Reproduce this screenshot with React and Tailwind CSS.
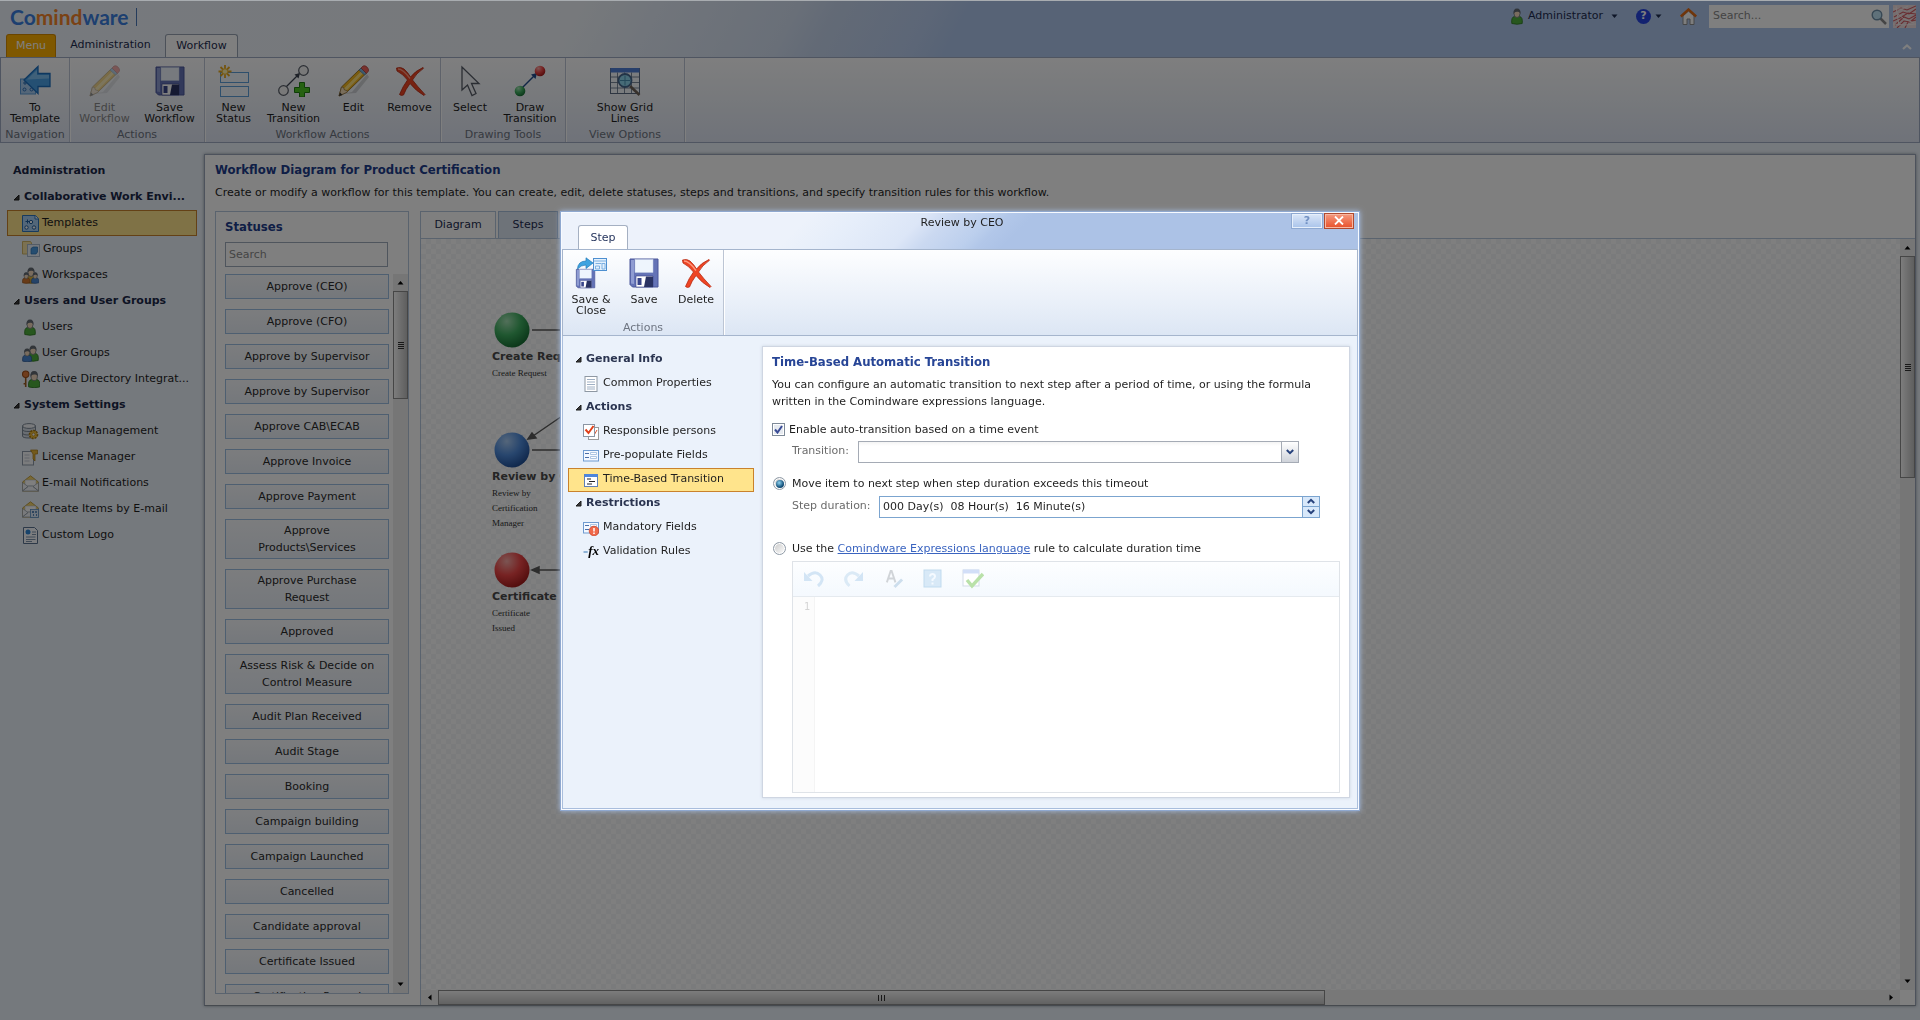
import React from "react";

/* ---------- icons ---------- */

const Svg = ({ size = 32, box = 32, children, className = "" }) => (
  <svg width={size} height={size} viewBox={`0 0 ${box} ${box}`} className={`shrink-0 ${className}`} aria-hidden="true">
    {children}
  </svg>
);

const ToTemplateIcon = () => (
  <Svg>
    <rect x="1.500" y="14" width="15" height="15" fill="#a9cdf0" stroke="#5b9bd8" />
    <circle cx="5.500" cy="24.500" r="1.500" fill="none" stroke="#2d6fb5" />
    <circle cx="12.500" cy="24.500" r="1.500" fill="none" stroke="#2d6fb5" />
    <path d="M4 18h4M6 16v4" stroke="#2d6fb5" />
    <path d="M5 15 19 1.500V8.500h12v13H19v7z" fill="#4aa0e6" stroke="#1c6fbf" strokeWidth="1.300" />
    <path d="M8 14.500 18 5v5h12v3.500z" fill="#8cc9f5" opacity=".8" />
  </Svg>
);

const PencilIcon = () => (
  <Svg>
    <path d="M4 29 14 27 29 9 31 12 18 28z" fill="#000" opacity=".15" />
    <path d="m1 31 2.500-9L22.500 3.500l5.500 5L9 27z" fill="#f2b61c" stroke="#8a6410" strokeWidth=".8" />
    <path d="m5.500 24 19-19 2 2L8 26z" fill="#ffe07a" />
    <path d="m1 31 2.500-9 2 .5 1 2.500 2.500.5.5 1.500z" fill="#f3dcb8" stroke="#8a6f45" strokeWidth=".7" />
    <path d="m1 31 1-3.500L4.500 30z" fill="#333" />
    <path d="m21 5 2-2 5.500 5-2 2z" fill="#7db4e0" stroke="#4c7ba3" strokeWidth=".7" />
    <path d="m23 3 2-2q2-1 4 1t1.500 4l-2 2.500z" fill="#f0625a" stroke="#a93b36" strokeWidth=".7" />
  </Svg>
);

const Floppy = () => (
  <>
    <path d="M2 2h28v28H4.500L2 27.500z" fill="#6473b6" stroke="#4a569a" />
    <path d="M3 3h3v24l-3-.5z" fill="#8f9cd2" />
    <rect x="7" y="2.500" width="18" height="13" fill="#eef5fd" stroke="#c4cfe4" strokeWidth=".5" />
    <path d="M8 19h17v11H8z" fill="#fff" stroke="#39458a" strokeWidth=".6" />
    <path d="M18 19.500h7V30h-9z" fill="#2a3363" />
    <rect x="9.500" y="21" width="4" height="7" fill="#39458a" />
  </>
);

const SaveIcon = () => (
  <Svg>
    <Floppy />
  </Svg>
);

const SaveCloseIcon = () => (
  <Svg>
    <g transform="translate(0 11) scale(.66)">
      <Floppy />
    </g>
    <rect x="18.500" y="1.500" width="13" height="12" fill="#e4f1fd" stroke="#4d8fd0" />
    <path d="M18.500 4h13M20.500 6.500h6M20.500 9h4v3h-4zM27 6.500h3v5.500h-3z" stroke="#7db0e2" fill="none" />
    <path d="M2.500 12Q3 4 11 4V.8L18 6l-7 5.500V8Q6 8 2.500 12z" fill="#3ea3e0" stroke="#1f79b8" strokeWidth=".7" />
  </Svg>
);

const NewStatusIcon = () => (
  <Svg>
    <rect x="2.500" y="7.500" width="28" height="10" fill="#f2f8fe" stroke="#5c9fd8" />
    <rect x="2.500" y="21.500" width="28" height="10" fill="#f2f8fe" stroke="#5c9fd8" />
    <path d="M7 0v13M.5 6.500h13M2.500 2l9 9M11.500 2l-9 9" stroke="#e9a91c" strokeWidth="1.800" />
    <circle cx="7" cy="6.500" r="2.700" fill="#fff3b0" stroke="#f0be3a" />
  </Svg>
);

const NewTransitionIcon = () => (
  <Svg>
    <path d="M8 22 21 9" stroke="#3c4250" strokeWidth="1.200" />
    <path d="m22 8-1.500 5.500-4-4z" fill="#3c4250" />
    <circle cx="25.500" cy="5.500" r="4.800" fill="#f3f3f3" stroke="#555b66" strokeWidth="1.200" />
    <circle cx="5.500" cy="25.500" r="4.800" fill="#f3f3f3" stroke="#555b66" strokeWidth="1.200" />
    <path d="M21.500 17.500h5v5h5v5h-5v4.500h-5v-4.500h-5v-5h5z" fill="#4cc423" stroke="#1f7a10" />
  </Svg>
);

const CrossIcon = () => (
  <Svg>
    <path d="M2.500 3Q7 1.500 10 4q4 3.500 6.500 8Q21 6 29 2.500l.5.800Q22 8.500 18.500 15 23 21 31 29.500l-1 1Q22 26 16 18.500 11.500 24.500 9.500 30q-2.500 1-4-.5Q9 21 13.500 15 9 9 3 6z" fill="#ee4423" stroke="#b72a12" strokeWidth=".8" />
    <path d="M4 4q5 0 12 9.500" stroke="#ff9a80" strokeWidth="1.300" fill="none" />
  </Svg>
);

const SelectIcon = () => (
  <Svg>
    <path d="M8 2v23l5.500-5 4.500 10.500 4-2L17.500 18.500H25z" fill="#f2f4f8" stroke="#555b66" strokeWidth="1.300" />
  </Svg>
);

const DrawTransitionIcon = () => (
  <Svg>
    <path d="M8 23 21 10" stroke="#234a8c" strokeWidth="1.500" />
    <path d="m23 8-1.500 6-4.500-4.500z" fill="#234a8c" />
    <circle cx="26" cy="6" r="5.300" fill="url(#ballRed)" />
    <circle cx="6" cy="26" r="5.300" fill="url(#ballGreen)" />
  </Svg>
);

const GridIcon = () => (
  <Svg>
    <rect x="1.500" y="3.500" width="29" height="25" fill="#f4f8fd" stroke="#5a6b82" />
    <rect x="1.500" y="3" width="29" height="4.500" fill="#4f7fd6" />
    <path d="M1.500 12h29M1.500 17.500h29M1.500 23h29M8.500 7.500v21M15.500 7.500v21M22.500 7.500v21" stroke="#5a6b82" strokeWidth=".8" />
    <path d="m21 21 9.500 9" stroke="#6f6258" strokeWidth="2.600" />
    <circle cx="16" cy="15.500" r="6.500" fill="#8fd6ee" stroke="#46688f" strokeWidth="1.800" />
    <path d="M11 15.500h10M16 10.500v10" stroke="#4a93b5" />
  </Svg>
);

const Person = ({ x = 0, y = 0, body = "#4fae3c", line = "#2a7420" }) => (
  <g transform={`translate(${x} ${y})`}>
    <path d="M.8 15.500Q0 9 3.500 8.500h5Q12 9 11.200 15.500 6 17 .8 15.500z" fill={body} stroke={line} strokeWidth=".8" />
    <ellipse cx="6" cy="5.500" rx="3" ry="4" fill="#f3d9bd" stroke="#70757c" strokeWidth=".8" />
    <path d="M2.500 6Q2 .5 6 .5t3.500 5.500Q9 3.500 6.500 3.800 3.500 3.500 2.500 6z" fill="#636a72" />
  </g>
);

const UserIcon = ({ x = 0 }) => (
  <Svg size={17} box={17}>
    <Person x={x} />
  </Svg>
);

const UserGroupIcon = () => (
  <Svg size={17} box={17}>
    <Person x="5" />
    <g transform="translate(0 3) scale(.85)">
      <Person body="#4a86d0" line="#2b5690" />
    </g>
  </Svg>
);

const WorkspacesIcon = () => (
  <Svg size={17} box={17}>
    <Person x="3" y="0" body="#d9b13f" line="#8f701a" />
    <g transform="translate(0 5) scale(.7)"><Person body="#d0762f" line="#8a4a15" /></g>
    <g transform="translate(9 5) scale(.7)"><Person body="#4a86d0" line="#2b5690" /></g>
  </Svg>
);

const DirectoryIcon = () => (
  <Svg size={18} box={17}>
    <Person x="5.500" y=".5" />
    <path d="M3.500 6v10M3.500 13h-2" stroke="#9a5a20" strokeWidth="1.500" />
    <circle cx="3.500" cy="4" r="3" fill="#e07a3a" stroke="#9c4a16" />
  </Svg>
);

const TemplatesIcon = () => (
  <Svg size={17} box={17}>
    <path d="M.5.5h13l3 3v13H.5z" fill="#a6cff3" stroke="#2f76bd" />
    <path d="M13 .5v3.500h3.500" fill="#fff" stroke="#2f76bd" />
    <path d="M3.500 6.500h4M5.500 4.500v4" stroke="#1f5f9f" />
    <circle cx="9" cy="7" r="1.700" fill="#fff" stroke="#1f5f9f" />
    <circle cx="4.500" cy="12.500" r="1.700" fill="#fff" stroke="#1f5f9f" />
    <circle cx="12" cy="12.500" r="1.700" fill="#fff" stroke="#1f5f9f" />
  </Svg>
);

const GroupsIcon = () => (
  <Svg size={18} box={18}>
    <path d="M.5 1.500h8l1 1.500V14H.5z" fill="#f6e3a4" stroke="#d0b566" />
    <rect x="5.500" y="4.500" width="12" height="12" fill="#e9f1fa" stroke="#a9b9cc" />
    <path d="M9 8.500 11 7h4.500v5L14 14H9z" fill="#4a9be0" stroke="#2870b4" strokeWidth=".7" />
  </Svg>
);

const BackupIcon = () => (
  <Svg size={17} box={17}>
    <path d="M.5 3v10q0 2 6.500 2t6.500-2V3z" fill="#d5dde6" stroke="#7c8896" />
    <ellipse cx="7" cy="3" rx="6.500" ry="2.400" fill="#f2f5f9" stroke="#7c8896" />
    <path d="M.5 6.500q0 2 6.500 2t6.500-2M.5 10q0 2 6.500 2" fill="none" stroke="#7c8896" />
    <circle cx="11.500" cy="11.500" r="4" fill="#f4c23c" stroke="#a87a12" strokeDasharray="2 1" strokeWidth="1.600" />
    <circle cx="11.500" cy="11.500" r="1.500" fill="#fff" stroke="#a87a12" strokeWidth=".7" />
  </Svg>
);

const LicenseIcon = () => (
  <Svg size={17} box={17}>
    <rect x=".5" y="2.500" width="11" height="13.500" fill="#f6f8fb" stroke="#8d99a8" />
    <path d="M2.500 6h5M2.500 9h5M2.500 12h5" stroke="#c2cad4" />
    <path d="M8.500 1h7v4h-2.500v7l-2-2V5z" fill="#e8b437" stroke="#a97b14" strokeWidth=".7" />
  </Svg>
);

const MailIcon = ({ extra }) => (
  <Svg size={17} box={17}>
    <path d="M.5 7 8.500.8 16.500 7v9H.5z" fill="#f3d26a" stroke="#b48f2b" strokeWidth=".8" />
    <path d="M3 5h11v6H3z" fill="#fff" stroke="#b9c2cc" strokeWidth=".6" />
    <path d="M.5 7.500 6 11.500.5 16zM16.500 7.500 11 11.500l5.500 4.500zM.5 16l6-5h4l6 5z" fill="#f2f5f8" stroke="#909ba8" strokeWidth=".7" />
    {extra && (
      <>
        <rect x="8.500" y="8.500" width="8" height="8" fill="#dceafa" stroke="#5b8fc4" strokeWidth=".8" />
        <path d="M10 11h2M14 10v2M11 14h1M14 14h1" stroke="#2f6aa8" strokeWidth="1.300" />
      </>
    )}
  </Svg>
);

const LogoDocIcon = () => (
  <Svg size={17} box={17}>
    <path d="M1.500.5h11l3 3v13h-14z" fill="#f8fbff" stroke="#5b7290" />
    <circle cx="6" cy="5" r="2.500" fill="#2e86d6" />
    <path d="M10 5h4M10 7.500h4M4 10h9.500M4 12.500h9.500M4 14.500h6" stroke="#7f94ad" />
  </Svg>
);

const PageIcon = () => (
  <Svg size={16} box={16}>
    <rect x="2" y=".5" width="12" height="15" fill="#fff" stroke="#8e98a3" />
    <path d="M4 3.500h8M4 6h8M4 8.500h8M4 11h8M4 13h8" stroke="#9fb0c4" />
  </Svg>
);

const ResponsibleIcon = () => (
  <Svg size={16} box={16}>
    <rect x="5.500" y="3.500" width="10" height="12" fill="#fff" stroke="#9a9a9a" />
    <path d="m8 10 2 3 4-7" stroke="#d8542e" fill="none" />
    <rect x=".5" y=".5" width="11" height="12" fill="#fff" stroke="#8b95a3" />
    <path d="m2.500 5.500 3 3.500 5-7" stroke="#e0401a" strokeWidth="2" fill="none" />
  </Svg>
);

const FieldsIcon = ({ alert }) => (
  <Svg size={16} box={16}>
    <rect x=".5" y="2.500" width="15" height="10.500" fill="#f3f8ff" stroke="#6f9bd0" />
    <path d="M2 5.500h4M2 9.500h4" stroke="#4a6ea8" />
    <path d="M7.500 4.500h6v2h-6zM7.500 8.500h6v2h-6z" fill="#fff" stroke="#9bb8dc" strokeWidth=".8" />
    {alert && (
      <>
        <circle cx="11" cy="11" r="4.800" fill="#f0694a" stroke="#cc3f22" strokeWidth=".7" />
        <path d="M11 8v3.500M11 12.500v1.500" stroke="#fff" strokeWidth="1.500" />
      </>
    )}
  </Svg>
);

const TimeIcon = () => (
  <Svg size={16} box={16}>
    <rect x="1.500" y="2.500" width="13" height="12" fill="#fff" stroke="#5f7fb5" />
    <path d="M1.500 3.500h13" stroke="#4d86dd" strokeWidth="3" />
    <path d="M4 7h4M6 9.500h6M4 12h5" stroke="#222" strokeWidth="1.200" />
  </Svg>
);

const FxIcon = () => (
  <span className="w-4 shrink-0 whitespace-nowrap font-['Liberation_Serif',serif] text-[13px] font-bold italic leading-4 text-black">
    <span className="text-[9px] text-[#3a7ab5]">=</span>fx
  </span>
);

const HomeIcon = () => (
  <Svg size={17} box={17}>
    <path d="M3 8v8.500h4V11h3v5.500h4V8L8.500 3z" fill="#fbfbfb" stroke="#8c8c8c" />
    <path d="M.8 8.500 8.500 1.500l7.700 7" fill="none" stroke="#e06a14" strokeWidth="2.400" />
  </Svg>
);

const Magnifier = () => (
  <Svg size={16} box={16}>
    <path d="m9.500 9.500 5.500 5.500" stroke="#8b8b8b" strokeWidth="2.500" />
    <circle cx="6" cy="6" r="4.800" fill="#bfe3f5" stroke="#6f8fa8" strokeWidth="1.400" />
  </Svg>
);

const Tri = ({ d, className = "" }) => (
  <svg width="7" height="5" viewBox="0 0 7 5" className={`shrink-0 ${className}`} aria-hidden="true">
    <path d={d} fill="currentColor" />
  </svg>
);
const UP = "M.5 4.500 3.500 1 6.500 4.500z";
const DOWN = "M.5.5h6L3.500 4z";

const Chevron = ({ up }) => (
  <svg width="8" height="6" viewBox="0 0 8 6" aria-hidden="true">
    <path d={up ? "M.8 5 4 1.800 7.200 5" : "M.8 1 4 4.200 7.200 1"} fill="none" stroke="#27427c" strokeWidth="2" />
  </svg>
);

/* ---------- header ---------- */

function TopBar() {
  return (
    <header className="flex h-[57px] shrink-0 justify-between border-t border-[#a8acb0] bg-[linear-gradient(118deg,#edf3fb_0%,#eef3f8_30%,#e2eaf6_34%,#d3dff1_41%,#c6d5ed_43%,#b9cdee_48%,#aec6ec_50%,#aec6ec_100%)]">
      <div className="flex flex-col justify-between">
        <div className="flex items-center pl-[10px] pt-[4px]">
          <span className="font-[Lato,sans-serif] text-[21px] font-bold leading-6 text-[#3b7fe0]">
            Co<span className="text-[#f5852a]">mind</span>ware
          </span>
          <span className="ml-[7px] h-[18px] w-px bg-[#4a78b8]" />
        </div>
        <nav className="flex h-6 items-stretch pl-[6px] pt-px">
          <button className="w-[50px] rounded-t-[3px] border border-b-0 border-[#d58a00] bg-[#ffb100] text-white">Menu</button>
          <button className="w-[109px] text-[#1d2c50]">Administration</button>
          <button className="w-[73px] rounded-t-[3px] border border-b-0 border-[#98a2b2] bg-white text-[#1d2c50]">Workflow</button>
        </nav>
      </div>
      <div className="flex flex-col items-end justify-between">
        <div className="flex items-center pr-[4px] pt-[4px] text-[#1d2c50]">
          <button className="flex items-center gap-[2px]">
            <UserIcon x={2} />
            <span>Administrator</span>
            <Tri d={DOWN} className="ml-[6px]" />
          </button>
          <button className="ml-[18px] flex items-center gap-[4px]" aria-label="Help">
            <span className="flex size-[15px] items-center justify-center rounded-full bg-[#2745e0] text-[11px] font-bold text-white">?</span>
            <Tri d={DOWN} />
          </button>
          <button className="ml-[18px]" aria-label="Home"><HomeIcon /></button>
          <label className="ml-[12px] flex h-[23px] w-[180px] items-center bg-white pr-[2px]">
            <input aria-label="Search" placeholder="Search..." className="min-w-0 flex-1 bg-transparent px-[4px] text-[11px] outline-none placeholder:text-[#888]" />
            <Magnifier />
          </label>
          <svg width="23" height="23" viewBox="0 0 23 23" className="ml-[4px]" aria-hidden="true">
            <rect width="23" height="23" fill="#ecdcde" />
            <path d="M0 7 8 3l6 2 9-4M1 12l9-5 6 2 7-5M0 16l7-3 8-5 8 1M2 20l9-8 5 2 7-4M4 23l7-7 6 1 6-5M12 23l3-6 8-2" stroke="#d25a62" strokeWidth="1.100" fill="none" />
            <path d="M0 4l9 0 6-3M5 9l6 5 10 4M0 19l12 1 11-1M3 1l3 20" stroke="#f8eeee" fill="none" />
          </svg>
        </div>
        <svg width="10" height="6" viewBox="0 0 10 6" className="mb-[7px] mr-[8px]" aria-hidden="true">
          <path d="M1 5 5 1.500 9 5" stroke="#fff" strokeWidth="2.200" fill="none" />
        </svg>
      </div>
    </header>
  );
}

function Tool({ icon, label, className, disabled }) {
  return (
    <button
      disabled={disabled}
      className={`flex flex-col items-center gap-[5px] text-center leading-[11px] text-[#1f1f1f] disabled:text-[#888] disabled:[&>svg]:opacity-50 ${className}`}
    >
      {icon}
      <span className="whitespace-pre">{label}</span>
    </button>
  );
}

function ToolGroup({ title, className = "", children }) {
  return (
    <section className={`flex flex-col justify-between border-r border-[#bcc5d4] pt-[7px] shadow-[1px_0_0_#fff] ${className}`}>
      <div className="flex justify-center">{children}</div>
      <h2 className="text-center leading-[14px] text-[#6d7480]">{title}</h2>
    </section>
  );
}

function Ribbon() {
  return (
    <div className="flex h-[86px] shrink-0 border border-[#9eabc2] bg-[linear-gradient(#fdfdfe,#eef2f8_50%,#dfe5f3)]">
      <ToolGroup title="Navigation" className="w-[69px]">
        <Tool icon={<ToTemplateIcon />} label={"To\nTemplate"} className="w-[60px]" />
      </ToolGroup>
      <ToolGroup title="Actions" className="w-[135px]">
        <Tool disabled icon={<PencilIcon />} label={"Edit\nWorkflow"} className="w-[65px]" />
        <Tool icon={<SaveIcon />} label={"Save\nWorkflow"} className="w-[65px]" />
      </ToolGroup>
      <ToolGroup title="Workflow Actions" className="w-[236px]">
        <Tool icon={<NewStatusIcon />} label={"New\nStatus"} className="w-[54px]" />
        <Tool icon={<NewTransitionIcon />} label={"New\nTransition"} className="w-[66px]" />
        <Tool icon={<PencilIcon />} label="Edit" className="w-[54px]" />
        <Tool icon={<CrossIcon />} label="Remove" className="w-[58px]" />
      </ToolGroup>
      <ToolGroup title="Drawing Tools" className="w-[125px]">
        <Tool icon={<SelectIcon />} label="Select" className="w-[54px]" />
        <Tool icon={<DrawTransitionIcon />} label={"Draw\nTransition"} className="w-[66px]" />
      </ToolGroup>
      <ToolGroup title="View Options" className="w-[119px]">
        <Tool icon={<GridIcon />} label={"Show Grid\nLines"} className="w-[70px]" />
      </ToolGroup>
    </div>
  );
}

/* ---------- sidebar ---------- */

const Expander = () => (
  <svg width="7" height="7" viewBox="0 0 7 7" className="shrink-0" aria-hidden="true">
    <path d="M6 1v5H1z" fill="#3a3a3a" stroke="#1c1c1c" />
  </svg>
);

const sideNav = [
  { title: "Collaborative Work Envi...", items: [
    ["Templates", <TemplatesIcon />, true],
    ["Groups", <GroupsIcon />],
    ["Workspaces", <WorkspacesIcon />],
  ] },
  { title: "Users and User Groups", items: [
    ["Users", <UserIcon x={2} />],
    ["User Groups", <UserGroupIcon />],
    ["Active Directory Integrat...", <DirectoryIcon />],
  ] },
  { title: "System Settings", items: [
    ["Backup Management", <BackupIcon />],
    ["License Manager", <LicenseIcon />],
    ["E-mail Notifications", <MailIcon />],
    ["Create Items by E-mail", <MailIcon extra />],
    ["Custom Logo", <LogoDocIcon />],
  ] },
];

function Sidebar() {
  return (
    <aside className="w-[204px] shrink-0 pl-[7px] pr-[7px] pt-[4px] text-[#1f1f1f]">
      <h2 className="pl-[6px] font-bold leading-[26px] text-[#1b2848]">Administration</h2>
      {sideNav.map((g) => (
        <div key={g.title}>
          <h3 className="flex h-[26px] items-center gap-[4px] whitespace-nowrap pl-[6px] font-bold text-[#1b2848]">
            <Expander />
            {g.title}
          </h3>
          {g.items.map(([label, icon, on]) => (
            <a
              key={label}
              href="#"
              className={`flex h-[26px] items-center gap-[3px] whitespace-nowrap border pl-[14px] ${on ? "border-[#c9822c] bg-[#ffe48c]" : "border-transparent"}`}
            >
              {icon}
              {label}
            </a>
          ))}
        </div>
      ))}
    </aside>
  );
}

/* ---------- workspace ---------- */

const statuses = [
  "Approve (CEO)", "Approve (CFO)", "Approve by Supervisor", "Approve by Supervisor", "Approve CAB\\ECAB",
  "Approve Invoice", "Approve Payment", "Approve Products\\Services", "Approve Purchase Request", "Approved",
  "Assess Risk & Decide on Control Measure", "Audit Plan Received", "Audit Stage", "Booking", "Campaign building",
  "Campaign Launched", "Cancelled", "Candidate approval", "Certificate Issued", "Certification Passed",
];

function VScroll({ className = "", thumb }) {
  return (
    <div className={`flex w-[15px] shrink-0 flex-col items-center bg-[#ececec] text-black ${className}`} aria-hidden="true">
      <div className="flex h-[17px] items-center"><Tri d={UP} /></div>
      <div className={`flex w-full items-center justify-center border border-[#8c8c8c] bg-[linear-gradient(90deg,#fafafa,#bdbdbd)] ${thumb}`}>
        <span className="flex flex-col gap-px">
          <i className="block h-px w-[6px] bg-[#333]" />
          <i className="block h-px w-[6px] bg-[#333]" />
          <i className="block h-px w-[6px] bg-[#333]" />
          <i className="block h-px w-[6px] bg-[#333]" />
        </span>
      </div>
      <div className="mt-auto flex h-[17px] items-center"><Tri d={DOWN} /></div>
    </div>
  );
}

function HScroll() {
  return (
    <div className="flex h-[15px] flex-1 items-center bg-[#f0f0f0] text-black" aria-hidden="true">
      <div className="flex w-[17px] justify-center"><Tri d={UP} className="-rotate-90" /></div>
      <div className="flex h-full w-[60%] items-center justify-center gap-[2px] border border-[#8c8c8c] bg-[linear-gradient(#f8f8f8,#c4c4c4)]">
        <i className="block h-[6px] w-px bg-[#333]" />
        <i className="block h-[6px] w-px bg-[#333]" />
        <i className="block h-[6px] w-px bg-[#333]" />
      </div>
      <div className="ml-auto flex w-[17px] justify-center"><Tri d={UP} className="rotate-90" /></div>
    </div>
  );
}

function StatusPanel() {
  return (
    <section className="flex w-[194px] shrink-0 flex-col border border-[#b4c6dc] bg-white">
      <h2 className="pl-[9px] pt-[6px] font-['DejaVu_Sans_Condensed','DejaVu_Sans',sans-serif] text-[13px] font-bold leading-[18px] text-[#203c8c]">Statuses</h2>
      <input aria-label="Search statuses" placeholder="Search" className="ml-[9px] mt-[6px] h-[25px] w-[163px] shrink-0 border border-[#9fabbb] bg-white px-[3px] outline-none placeholder:text-[#8a8a8a]" />
      <div className="mt-[7px] flex min-h-0 flex-1">
        <ul className="flex flex-1 flex-col gap-[10px] overflow-hidden pl-[9px] pr-[4px]">
          {statuses.map((s, i) => (
            <li key={i} className="flex min-h-[25px] shrink-0 items-center justify-center border border-[#9dbfe2] bg-[linear-gradient(#f8fafd,#eaf0f8)] px-[10px] py-[2px] text-center leading-[17px] text-[#2a2a2a]">
              {s}
            </li>
          ))}
        </ul>
        <VScroll thumb="h-[108px]" />
      </div>
    </section>
  );
}

function Node({ fill, title, lines, className }) {
  return (
    <div className={`absolute w-[120px] ${className}`}>
      <svg width="36" height="36" viewBox="0 0 36 36" className="ml-[2px]" aria-hidden="true">
        <circle cx="18" cy="18" r="17.500" fill={fill} />
      </svg>
      <div className="whitespace-nowrap font-bold leading-[18px] text-[#4a4a4a]">{title}</div>
      <div className="font-['Liberation_Serif',serif] text-[9px] leading-[15px] text-[#333]">
        {lines.map((l) => <div key={l} className="whitespace-nowrap">{l}</div>)}
      </div>
    </div>
  );
}

function Canvas() {
  return (
    <div className="relative min-w-0 flex-1 overflow-hidden bg-[repeating-conic-gradient(#f4f6f8_0_25%,#ffffff_0_50%)] bg-[length:10px_10px]">
      <svg width="400" height="420" className="absolute left-0 top-0" aria-hidden="true">
        <g stroke="#5a5a5a" strokeWidth="1.500" fill="#5a5a5a">
          <path d="M111 91H300M111 211H300M116 331H300M112 197 230 116" fill="none" />
          <path d="m107 200 4-6 4 5zM111 331l7-3v6z" />
        </g>
      </svg>
      <Node fill="url(#ballGreen)" title="Create Request" lines={["Create Request"]} className="left-[71px] top-[73px]" />
      <Node fill="url(#ballBlue)" title="Review by CEO" lines={["Review by", "Certification", "Manager"]} className="left-[71px] top-[193px]" />
      <Node fill="url(#ballRed)" title="Certificate Issued" lines={["Certificate", "Issued"]} className="left-[71px] top-[313px]" />
    </div>
  );
}

function Workspace() {
  return (
    <main className="mb-[14px] mr-[4px] flex min-w-0 flex-1 flex-col border border-[#9aa4b8] border-b-[#8d949e] bg-white pt-px shadow-[0_0_3px_#8d949e]">
      <h1 className="pl-[10px] pt-[4px] font-['DejaVu_Sans_Condensed','DejaVu_Sans',sans-serif] text-[13px] font-bold leading-[20px] text-[#203c8c]">
        Workflow Diagram for Product Certification
      </h1>
      <p className="pl-[10px] pt-[4px] leading-[18px] text-[#1f1f1f]">
        Create or modify a workflow for this template. You can create, edit, delete statuses, steps and transitions, and specify transition rules for this workflow.
      </p>
      <div className="mt-[9px] flex min-h-0 flex-1 gap-[11px] pl-[10px]">
        <div className="mb-[11px] flex"><StatusPanel /></div>
        <section className="flex min-w-0 flex-1 flex-col border-l border-[#b4c6dc]">
          <div role="tablist" className="flex h-[28px] shrink-0 gap-[2px] border-b border-[#b4c6dc] text-[#1d2c50]">
            <button role="tab" aria-selected="true" className="w-[75px] border border-b-0 border-l-0 border-[#b4c6dc] bg-white">Diagram</button>
            <button role="tab" aria-selected="false" className="w-[60px] border border-b-0 border-[#a9c0dd] bg-[#dde7f3]">Steps</button>
          </div>
          <div className="flex min-h-0 flex-1">
            <Canvas />
            <VScroll thumb="h-[222px]" />
          </div>
          <div className="flex bg-white pr-[15px]"><HScroll /></div>
        </section>
      </div>
    </main>
  );
}

/* ---------- dialog ---------- */

const dialogNav = [
  { title: "General Info", items: [["Common Properties", <PageIcon />]] },
  { title: "Actions", items: [
    ["Responsible persons", <ResponsibleIcon />],
    ["Pre-populate Fields", <FieldsIcon />],
    ["Time-Based Transition", <TimeIcon />, true],
  ] },
  { title: "Restrictions", items: [
    ["Mandatory Fields", <FieldsIcon alert />],
    ["Validation Rules", <FxIcon />],
  ] },
];

function Radio({ id, ...rest }) {
  return (
    <span className="grid size-[13px] shrink-0 place-items-center">
      <input id={id} type="radio" name="rule" {...rest} className="peer col-start-1 row-start-1 size-[13px] appearance-none rounded-full border border-[#8f9aa6] bg-[linear-gradient(135deg,#c8c8c8,#fff)] shadow-[inset_0_0_0_1px_#fff]" />
      <span className="pointer-events-none col-start-1 row-start-1 hidden size-[8px] rounded-full bg-[radial-gradient(circle_at_40%_35%,#8fd3f0,#16547e_60%,#0c2f52)] peer-checked:block" />
    </span>
  );
}

function EditorToolbar() {
  return (
    <div className="flex h-[35px] items-center gap-[19px] border-b border-[#e3e8ee] bg-[linear-gradient(#fdfeff,#f4f9fe)] pl-[11px] opacity-90">
      <button disabled aria-label="Undo">
        <Svg size={21} box={21}><path d="M4 8Q11 2 16 7t-2 11" fill="none" stroke="#cfe3f5" strokeWidth="3" /><path d="M0 4v9h8.500z" fill="#cfe3f5" /></Svg>
      </button>
      <button disabled aria-label="Redo">
        <Svg size={21} box={21}><path d="M15 8Q8 2 3.500 7t2 11" fill="none" stroke="#d8e8f6" strokeWidth="3" /><path d="M19 4v9h-8.500z" fill="#cfe3f5" /></Svg>
      </button>
      <button disabled aria-label="Format text">
        <Svg size={20} box={21}><path d="m3 14 4-12h1l4 12M4.500 10h6" fill="none" stroke="#ccd0d4" strokeWidth="2" /><path d="m11 19 8-8" stroke="#c8dbec" strokeWidth="3" /></Svg>
      </button>
      <button disabled aria-label="Expression help">
        <Svg size={20} box={20}>
          <rect x="1" y="1" width="17" height="17" fill="#d4e7f7" stroke="#bbd7ee" />
          <path d="M7 7.500q0-2.500 2.500-2.500T12 7.500Q12 9 9.500 10.500V12M9.500 13.500v2" fill="none" stroke="#f4faff" strokeWidth="2" />
        </Svg>
      </button>
      <button disabled aria-label="Check expression">
        <Svg size={22} box={22}>
          <rect x="1" y="2" width="16" height="16" fill="#fff" stroke="#cfd9e6" />
          <path d="M1 3.500h16" stroke="#cfdcf8" strokeWidth="4" />
          <path d="m5 12 5 6L21 6" fill="none" stroke="#b2dea0" strokeWidth="3.400" />
        </Svg>
      </button>
    </div>
  );
}

function DialogForm() {
  return (
    <form className="flex-1 border border-[#cfd6e2] bg-white pb-[4px] pl-[9px] pr-[9px] pt-[5px] text-[#1f1f1f] shadow-[0_0_3px_#cdd5e2]">
      <h2 className="font-['DejaVu_Sans_Condensed','DejaVu_Sans',sans-serif] text-[13px] font-bold leading-[20px] text-[#274596]">Time-Based Automatic Transition</h2>
      <p className="mt-[4px] leading-[17px]">
        You can configure an automatic transition to next step after a period of time, or using the formula written in the Comindware expressions language.
      </p>
      <div className="mt-[11px] flex items-center gap-[4px] leading-[18px]">
        <span className="grid size-[13px] shrink-0 place-items-center">
          <input id="auto" type="checkbox" defaultChecked className="peer col-start-1 row-start-1 size-[13px] appearance-none border border-[#7e8a98] bg-[#e6eaf0] shadow-[inset_0_0_0_1px_#fff]" />
          <svg width="9" height="9" viewBox="0 0 9 9" className="pointer-events-none col-start-1 row-start-1 hidden peer-checked:block" aria-hidden="true">
            <path d="m1 4.500 2.500 3L8 1" fill="none" stroke="#3a4c96" strokeWidth="2" />
          </svg>
        </span>
        <label htmlFor="auto">Enable auto-transition based on a time event</label>
      </div>
      <div className="mt-[2px] flex items-center pl-[20px]">
        <label htmlFor="transition" className="w-[66px] text-[#6b6b6b]">Transition:</label>
        <div className="grid w-[441px] items-center">
          <select id="transition" className="col-start-1 row-start-1 h-[22px] appearance-none border border-[#a5abb5] bg-[linear-gradient(#f4f4f4,#fff_4px)] px-[4px] outline-none">
            <option value=""></option>
          </select>
          <span className="pointer-events-none col-start-1 row-start-1 flex h-[22px] w-[18px] items-center justify-center justify-self-end border border-[#a5abb5] bg-[linear-gradient(#fff,#cfd3da)]">
            <Chevron />
          </span>
        </div>
      </div>
      <div className="mt-[12px] flex items-center gap-[6px] pl-[1px] leading-[18px]">
        <Radio id="timeout" defaultChecked />
        <label htmlFor="timeout">Move item to next step when step duration exceeds this timeout</label>
      </div>
      <div className="mt-[3px] flex items-center pl-[20px]">
        <label htmlFor="duration" className="w-[87px] text-[#6b6b6b]">Step duration:</label>
        <input id="duration" defaultValue={"000 Day(s)\u00a0 08 Hour(s)\u00a0 16 Minute(s)"} className="h-[22px] w-[424px] border border-[#7ba4cf] bg-white px-[3px] outline-none" />
        <span className="flex h-[22px] w-[17px] flex-col border border-l-0 border-[#7ba4cf] bg-[#d8e8fa]">
          <button type="button" aria-label="Increase" className="flex flex-1 items-center justify-center border-b border-[#7ba4cf]"><Chevron up /></button>
          <button type="button" aria-label="Decrease" className="flex flex-1 items-center justify-center"><Chevron /></button>
        </span>
      </div>
      <div className="mt-[22px] flex items-center gap-[6px] pl-[1px] leading-[18px]">
        <Radio id="expr" />
        <label htmlFor="expr">
          Use the <a href="#" className="text-[#3a64c0] underline">Comindware Expressions language</a> rule to calculate duration time
        </label>
      </div>
      <div className="ml-[20px] mt-[3px] border border-[#dfe3e8]">
        <EditorToolbar />
        <div className="flex h-[195px]">
          <span className="w-[22px] border-r border-[#f4f4f4] bg-[#fcfcfc] pr-[4px] pt-[2px] text-right font-['DejaVu_Sans_Mono',monospace] text-[10px] leading-4 text-[#d4d4d4]">1</span>
          <textarea aria-label="Expression" className="flex-1 resize-none bg-white p-1 outline-none" />
        </div>
      </div>
    </form>
  );
}

function Dialog() {
  return (
    <div role="dialog" aria-label="Review by CEO" className="w-[800px] border border-[#8fa8cf] bg-[#f7faff] p-px text-[#1f1f1f] shadow-[0_0_5px_#a5bbe0]">
      <div className="grid h-[36px] grid-cols-[1fr_auto_1fr] bg-[linear-gradient(135deg,#edf2fb_0%,#edf2fb_30%,#e6eefa_36%,#dce6f7_44%,#cbd9f1_47%,#bccfed_52%,#b2c7e9_54%,#acc2e6_57%,#acc2e6_100%)]">
        <button className="ml-[16px] w-[50px] self-end rounded-t-[3px] border border-b-0 border-[#a5b0c2] bg-white pb-[2px] pt-[3px] leading-[18px] text-[#27365e]">Step</button>
        <h1 className="pl-[4px] pt-px leading-[18px]">Review by CEO</h1>
        <div className="mr-[4px] flex items-start justify-end gap-px">
          <button aria-label="Help" className="flex h-[16px] w-[32px] items-center justify-center border border-[#8ea9d2] bg-[linear-gradient(#dbe7f8,#a9c3ea)] shadow-[inset_0_0_0_1px_#e6effb]">
            <span className="text-[11px] font-bold leading-none text-[#7190c2]">?</span>
          </button>
          <button aria-label="Close" className="flex h-[16px] w-[30px] items-center justify-center border border-[#b04a30] bg-[linear-gradient(#f59a80,#e8502a)] shadow-[inset_0_0_0_1px_#f8b7a2]">
            <svg width="10" height="9" viewBox="0 0 10 9" aria-hidden="true"><path d="m1 .5 8 8M9 .5l-8 8" stroke="#fff" strokeWidth="1.800" /></svg>
          </button>
        </div>
      </div>
      <div className="flex h-[87px] border border-[#a5b5cd] bg-[linear-gradient(#fdfeff,#eaf0f9_60%,#dce6f4)]">
        <ToolGroup title="Actions" className="w-[161px]">
          <Tool icon={<SaveCloseIcon />} label={"Save &\nClose"} className="w-[56px]" />
          <Tool icon={<SaveIcon />} label="Save" className="w-[50px]" />
          <Tool icon={<CrossIcon />} label="Delete" className="w-[54px]" />
        </ToolGroup>
      </div>
      <div className="flex gap-[8px] border border-t-0 border-[#a9bedd] bg-[#ebf2fb] pb-[10px] pl-[5px] pr-[7px] pt-[10px]">
        <nav className="w-[186px] shrink-0 pt-[2px]">
          {dialogNav.map((g) => (
            <div key={g.title}>
              <h3 className="flex h-[24px] items-center gap-[4px] pl-[7px] font-bold text-[#2a3450]">
                <Expander />
                {g.title}
              </h3>
              {g.items.map(([label, icon, on]) => (
                <a
                  key={label}
                  href="#"
                  className={`flex h-[24px] items-center gap-[4px] whitespace-nowrap border pl-[14px] ${on ? "border-[#c9822c] bg-[#ffe48c]" : "border-transparent"}`}
                >
                  {icon}
                  {label}
                </a>
              ))}
            </div>
          ))}
        </nav>
        <DialogForm />
      </div>
    </div>
  );
}

export default function App() {
  return (
    <div className="flex h-screen flex-col overflow-hidden bg-[#ebf2fa] font-['DejaVu_Sans',sans-serif] text-[11px]">
      <svg width="0" height="0" className="absolute" aria-hidden="true">
        <defs>
          <radialGradient id="ballGreen" cx=".35" cy=".25" r=".8">
            <stop offset="0" stopColor="#a5e0b4" /><stop offset=".5" stopColor="#3fae60" /><stop offset="1" stopColor="#146a30" />
          </radialGradient>
          <radialGradient id="ballBlue" cx=".35" cy=".25" r=".8">
            <stop offset="0" stopColor="#a9ccf5" /><stop offset=".5" stopColor="#4f8cdc" /><stop offset="1" stopColor="#1d4c94" />
          </radialGradient>
          <radialGradient id="ballRed" cx=".35" cy=".25" r=".8">
            <stop offset="0" stopColor="#f7aaa6" /><stop offset=".5" stopColor="#ee4646" /><stop offset="1" stopColor="#a01818" />
          </radialGradient>
        </defs>
      </svg>
      <TopBar />
      <Ribbon />
      <div className="flex min-h-0 flex-1 pt-[11px]">
        <Sidebar />
        <Workspace />
      </div>
      <div className="fixed inset-x-0 bottom-0 top-px flex items-center justify-center bg-black/50">
        <Dialog />
      </div>
    </div>
  );
}
